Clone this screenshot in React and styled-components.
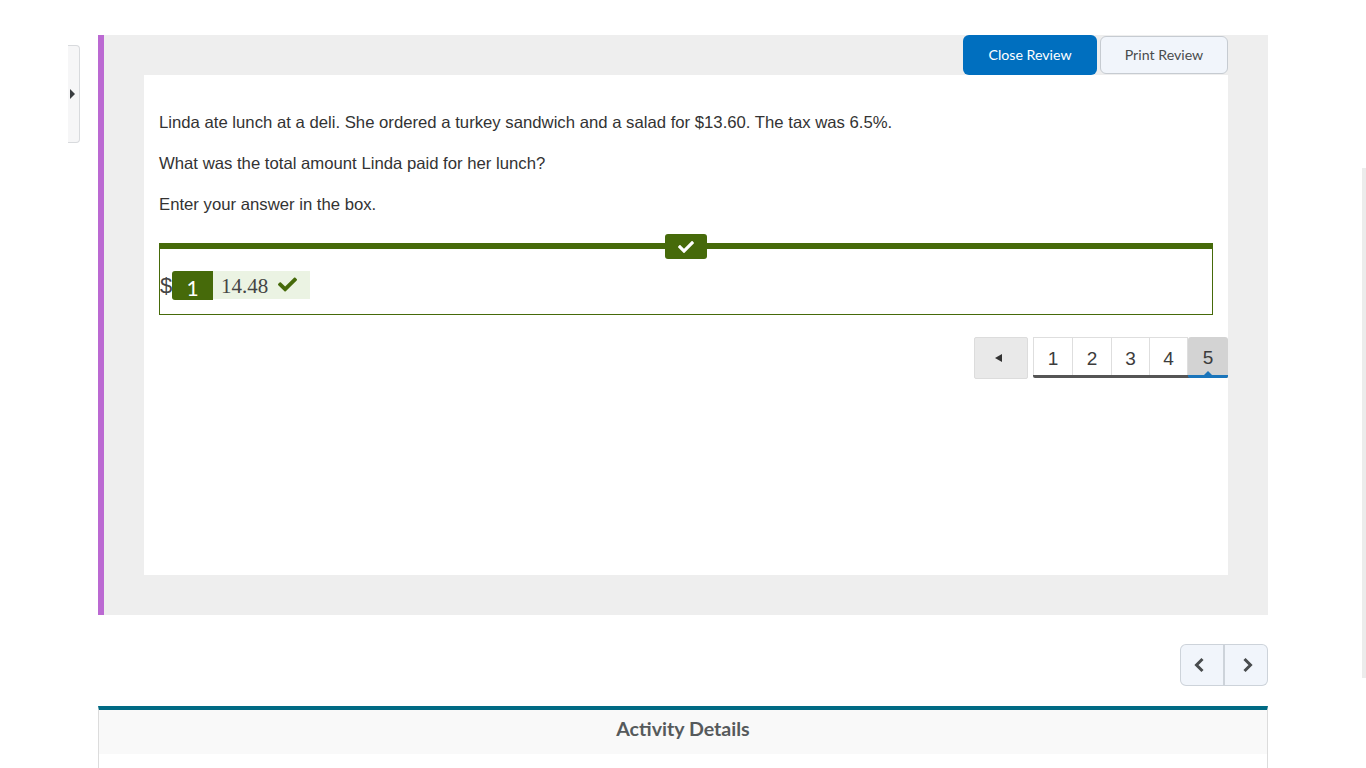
import React from "react";
import styled, { createGlobalStyle } from "styled-components";
import { FaCheck } from "react-icons/fa";

const GlobalStyle = createGlobalStyle`
  html, body {
    margin: 0;
    padding: 0;
    height: 768px;
    overflow: hidden;
    background: #fff;
    font-family: "Liberation Sans", Arial, sans-serif;
  }
`;

const Page = styled.div`
  position: relative;
  width: 1366px;
  height: 768px;
  overflow: hidden;
  padding: 35px 98px 0;
  box-sizing: border-box;
`;

const SideTab = styled.div`
  position: absolute;
  left: 68px;
  top: 45px;
  width: 12px;
  height: 98px;
  box-sizing: border-box;
  background: #f6f6f7;
  border: 1px solid #d8dadd;
  border-left: none;
  border-radius: 0 4px 4px 0;
  display: flex;
  align-items: center;
  padding-left: 2px;

  &::after {
    content: "";
    border-left: 5px solid #3a3d40;
    border-top: 5px solid transparent;
    border-bottom: 5px solid transparent;
  }
`;

const ScrollThumb = styled.div`
  position: absolute;
  right: 0;
  top: 168px;
  width: 4px;
  height: 510px;
  background: #ececec;
`;

const Panel = styled.section`
  width: 1170px;
  height: 580px;
  box-sizing: border-box;
  background: #eeeeee;
  border-left: 6px solid #bb69d2;
  padding: 0 40px 40px;
  display: flex;
  flex-direction: column;
`;

const Toolbar = styled.div`
  height: 40px;
  display: flex;
  justify-content: flex-end;
  align-items: flex-start;
  gap: 3px;
`;

const ReviewButton = styled.button`
  font-family: Lato, sans-serif;
  font-size: 14.2px;
  height: ${(p) => (p.$primary ? "40px" : "38px")};
  width: ${(p) => (p.$primary ? "134px" : "128px")};
  margin-top: ${(p) => (p.$primary ? "0" : "1px")};
  padding: 0 0 2px;
  border-radius: 6px;
  border: ${(p) => (p.$primary ? "none" : "1px solid #c6cbd1")};
  background: ${(p) => (p.$primary ? "#006fbf" : "#f1f5fb")};
  color: ${(p) => (p.$primary ? "#fff" : "#494c4e")};
`;

const Sheet = styled.div`
  flex: 1;
  background: #fff;
  padding: 38px 15px 0;
  display: flex;
  flex-direction: column;
`;

const Para = styled.p`
  margin: 0 0 21px;
  font-size: 16.72px;
  line-height: 20px;
  color: #333;
`;

const AnswerBox = styled.div`
  position: relative;
  margin-top: 7px;
  height: 72px;
  box-sizing: border-box;
  border: 1px solid #466a0a;
  border-top: 6px solid #466a0a;
  display: flex;
  align-items: flex-start;
  padding-top: 22px;
`;

const StatusBadge = styled.div`
  position: absolute;
  top: -15px;
  left: 505px;
  width: 42px;
  height: 25px;
  border-radius: 3px;
  background: #466a0a;
  color: #fff;
  font-size: 16px;
  padding-right: 1px;
  box-sizing: border-box;
  display: flex;
  align-items: center;
  justify-content: center;
`;

const Dollar = styled.span`
  font-size: 22px;
  line-height: 29px;
  color: #444;
  width: 12px;
`;

const PartNumber = styled.span`
  width: 41px;
  height: 29px;
  box-sizing: border-box;
  padding-top: 2px;
  background: #466a0a;
  color: #fff;
  font-family: Lato, sans-serif;
  font-size: 21px;
  line-height: 29px;
  text-align: center;
  border-radius: 3px 0 0 3px;
`;

const Response = styled.span`
  width: 97px;
  height: 28px;
  box-sizing: border-box;
  padding: 2px 0 0 8px;
  background: #ebf3e3;
  color: #444;
  font-family: "Liberation Serif", serif;
  font-size: 21px;
  line-height: 29px;
  display: flex;
  align-items: center;
  gap: 10px;

  svg {
    color: #466a0a;
    font-size: 19px;
    margin-top: -3px;
  }
`;

const Pager = styled.nav`
  margin: 22px -15px 0 0;
  display: flex;
  justify-content: flex-end;
  align-items: flex-start;
  gap: 5px;
`;

const PrevButton = styled.div`
  width: 54px;
  height: 42px;
  box-sizing: border-box;
  background: #e9e9e9;
  border: 1px solid #dcdcdc;
  border-radius: 2px;
  display: flex;
  align-items: center;
  justify-content: center;

  &::before {
    content: "";
    margin-right: 6px;
    border-right: 7px solid #333;
    border-top: 4px solid transparent;
    border-bottom: 4px solid transparent;
  }
`;

const PageList = styled.div`
  display: flex;
  height: 41px;
  box-sizing: border-box;
  border-bottom: 3px solid #555;
  border-radius: 0 0 2px 2px;
`;

const PageItem = styled.div`
  position: relative;
  width: ${(p) => p.$w}px;
  height: 38px;
  box-sizing: border-box;
  background: ${(p) => (p.$active ? "#d3d3d3" : "#fff")};
  border: 1px solid #dedede;
  border-bottom: none;
  border-left: ${(p) => (p.$first ? "1px solid #dedede" : "none")};
  color: #3c3c3c;
  font-size: 19px;
  line-height: 41px;
  text-align: center;

  ${(p) =>
    p.$active &&
    `
    height: 41px;
    border: none;
    border-radius: 3px 3px 2px 2px;
    border-bottom: 3px solid #1a75bb;

    &::after {
      content: "";
      position: absolute;
      left: 50%;
      bottom: 0;
      margin-left: -4px;
      border-left: 4px solid transparent;
      border-right: 4px solid transparent;
      border-bottom: 4px solid #1a75bb;
    }
  `}
`;

const NavRow = styled.div`
  margin-top: 29px;
  display: flex;
  justify-content: flex-end;
`;

const NavButton = styled.button`
  width: ${(p) => (p.$right ? "43px" : "45px")};
  height: 42px;
  padding: ${(p) => (p.$right ? "0 0 0 4px" : "0 7px 0 0")};
  background: #f1f5fb;
  border: 1px solid #cdd3da;
  border-left-width: ${(p) => (p.$right ? "0" : "1px")};
  border-right-width: ${(p) => (p.$right ? "1px" : "2px")};
  border-radius: ${(p) => (p.$right ? "0 6px 6px 0" : "6px 0 0 6px")};
  display: flex;
  align-items: center;
  justify-content: center;
  color: #494c4e;
`;

const DetailsCard = styled.section`
  margin-top: 20px;
  width: 1170px;
  height: 70px;
  box-sizing: border-box;
  border-top: 4px solid #006a84;
  border-left: 1px solid #dcdcdc;
  border-right: 1px solid #dcdcdc;
`;

const DetailsTitle = styled.h2`
  margin: 0;
  height: 44px;
  background: #f9f9f9;
  font-family: Lato, sans-serif;
  font-size: 19.6px;
  font-weight: 700;
  line-height: 37px;
  text-align: center;
  color: #565a5c;
`;

const Chevron = ({ right }) => (
  <svg width="14" height="16" viewBox="0 0 14 16" fill="none">
    <path
      d={right ? "M3.5 2L9.5 8l-6 6" : "M10.5 2L4.5 8l6 6"}
      stroke="currentColor"
      strokeWidth="3"
    />
  </svg>
);

const pages = [
  { n: 1, w: 40 },
  { n: 2, w: 39 },
  { n: 3, w: 38 },
  { n: 4, w: 38 },
  { n: 5, w: 40 },
];

export default function App() {
  return (
    <Page>
      <GlobalStyle />
      <SideTab />
      <ScrollThumb />
      <Panel>
        <Toolbar>
          <ReviewButton $primary>Close Review</ReviewButton>
          <ReviewButton>Print Review</ReviewButton>
        </Toolbar>
        <Sheet>
          <Para>Linda ate lunch at a deli. She ordered a turkey sandwich and a salad for $13.60. The tax was 6.5%.</Para>
          <Para>What was the total amount Linda paid for her lunch?</Para>
          <Para>Enter your answer in the box.</Para>
          <AnswerBox>
            <StatusBadge>
              <FaCheck />
            </StatusBadge>
            <Dollar>$</Dollar>
            <PartNumber>1</PartNumber>
            <Response>
              14.48
              <FaCheck />
            </Response>
          </AnswerBox>
          <Pager>
            <PrevButton />
            <PageList>
              {pages.map((p, i) => (
                <PageItem key={p.n} $w={p.w} $first={i === 0} $active={p.n === 5}>
                  {p.n}
                </PageItem>
              ))}
            </PageList>
          </Pager>
        </Sheet>
      </Panel>
      <NavRow>
        <NavButton>
          <Chevron />
        </NavButton>
        <NavButton $right>
          <Chevron right />
        </NavButton>
      </NavRow>
      <DetailsCard>
        <DetailsTitle>Activity Details</DetailsTitle>
      </DetailsCard>
    </Page>
  );
}
